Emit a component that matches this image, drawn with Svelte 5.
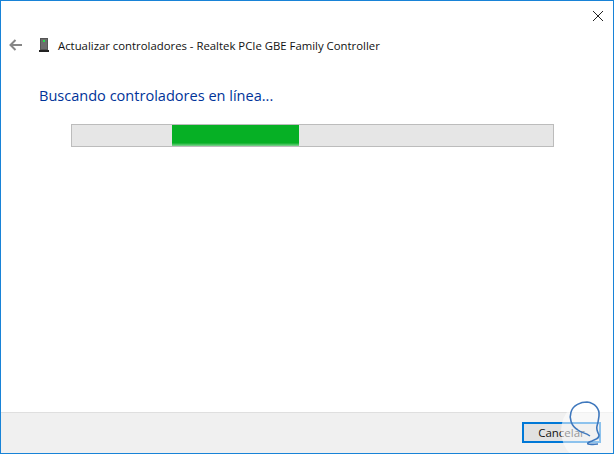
<script lang="ts">
  let title = "Actualizar controladores - Realtek PCIe GBE Family Controller";
  let heading = "Buscando controladores en línea...";
</script>

<div class="window">
  <div class="titlebar">
    <svg class="close" width="12" height="12" viewBox="0 0 12 12" aria-hidden="true">
      <path d="M1 1 L11 11 M11 1 L1 11" stroke="#222" stroke-width="1" fill="none" />
    </svg>
  </div>

  <div class="nav">
    <svg class="back" width="14" height="12" viewBox="0 0 14 12" aria-hidden="true">
      <path d="M13 6 H2 M6.5 1 L1.5 6 L6.5 11" stroke="#868686" stroke-width="2" fill="none" />
    </svg>
    <svg class="device" width="10" height="14" viewBox="0 0 10 14" aria-hidden="true">
      <rect x="1" y="0" width="8" height="12" fill="#555" />
      <rect x="2" y="1" width="6" height="10" fill="#6d6d6d" />
      <rect x="4" y="2" width="2" height="2" fill="#22e04a" />
      <rect x="0" y="12" width="10" height="2" fill="#222" />
    </svg>
    <span class="title">{title}</span>
  </div>

  <main class="content">
    <h1>{heading}</h1>
    <div class="progress">
      <div class="bar" style="width: 127px"></div>
    </div>
  </main>

  <footer class="footer">
    <button class="cancel">Cancelar</button>
  </footer>

  <svg class="watermark" width="60" height="60" viewBox="0 0 60 60" aria-hidden="true">
    <circle cx="40" cy="37" r="33" fill="#fff" fill-opacity="0.55" />
    <path d="M24 36 C17 32 15 24 17 18 C19 11 27 8 33 8 C41 9 46 15 45 22 C44.5 26 44 29 43 32 C42 35 44 39 45 41 C45 45 42 45 38 47 C35 48 33 49 34 50 C37 51 41 50 44 50"
      stroke="#3f78bd" stroke-width="1.6" fill="none" />
    <path d="M24 36 C27 39 31 38 36 42" stroke="#3f78bd" stroke-width="1.4" fill="none" />
  </svg>
</div>

<style>
  :global(body) {
    margin: 0;
    background: #fff;
  }

  .window {
    position: relative;
    box-sizing: border-box;
    width: 614px;
    height: 454px;
    display: flex;
    flex-direction: column;
    border: 1px solid #1883d7;
    background: #fff;
    font-family: "Open Sans", "Noto Sans", sans-serif;
    overflow: hidden;
  }

  .titlebar {
    height: 29px;
    flex: none;
    display: flex;
    justify-content: flex-end;
    align-items: flex-start;
    padding: 9px 9px 0 0;
    box-sizing: border-box;
  }

  .nav {
    height: 30px;
    flex: none;
    display: flex;
    align-items: center;
    padding-left: 8px;
  }

  .back {
    margin-right: 16px;
  }

  .device {
    margin-right: 9px;
  }

  .title {
    font-size: 11.35px;
    color: #111;
  }

  .content {
    flex: 1;
    padding: 0 59px 0 38px;
  }

  h1 {
    margin: 24px 0 0;
    font-size: 14.55px;
    font-weight: 400;
    line-height: 22px;
    color: #003399;
  }

  .progress {
    box-sizing: border-box;
    height: 23px;
    margin: 18px 0 0 32px;
    border: 1px solid #bcbcbc;
    background: #e6e6e6;
    padding-left: 100px;
  }

  .bar {
    height: 100%;
    background: linear-gradient(to bottom, #06b025 85%, #7fd38f 100%);
  }

  .footer {
    height: 41px;
    flex: none;
    box-sizing: border-box;
    border-top: 1px solid #dfdfdf;
    background: #f0f0f0;
    display: flex;
    justify-content: flex-end;
    align-items: flex-start;
    padding: 9px 12px 0 0;
  }

  .cancel {
    box-sizing: border-box;
    width: 79px;
    height: 21px;
    padding: 0;
    border: 2px solid #0078d7;
    background: #e1e1e1;
    color: #111;
    font-family: inherit;
    font-size: 11.5px;
    line-height: 16px;
  }

  .watermark {
    position: absolute;
    right: -1px;
    bottom: -1px;
  }
</style>
